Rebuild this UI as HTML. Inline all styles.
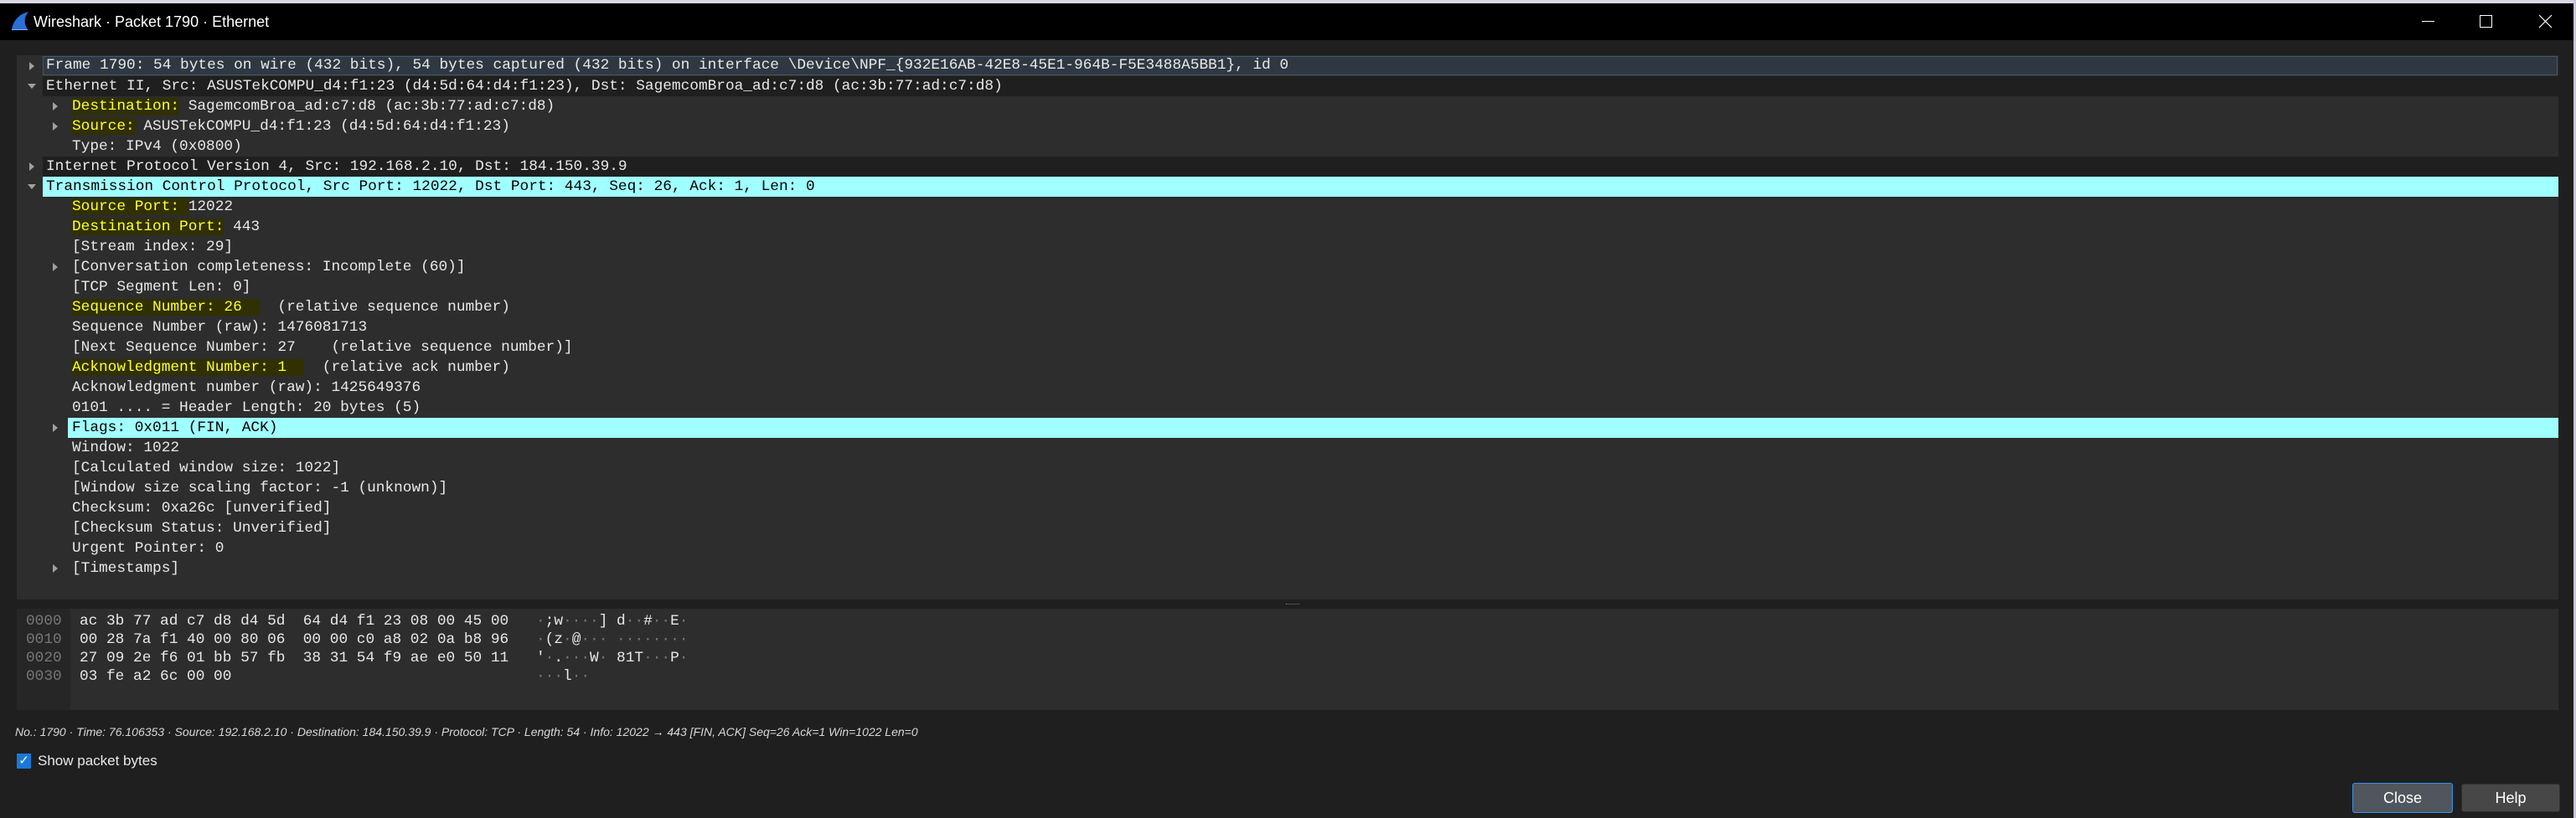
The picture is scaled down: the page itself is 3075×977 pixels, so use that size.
<!DOCTYPE html>
<html><head><meta charset="utf-8"><style>
*{margin:0;padding:0;box-sizing:border-box}
body{width:3075px;height:977px;background:#1f1f1f;position:relative;overflow:hidden;font-family:"Liberation Sans",sans-serif}
.mono{font-family:"Liberation Mono",monospace;font-size:17.8px}
.row{position:absolute;left:20px;width:3034px;height:24px;line-height:24px;color:#e8e8e8;white-space:pre}
.row .t{position:absolute;top:0;white-space:pre}
.dk{background:#1f1f1f}
.cy .t{background:#a0ffff;color:#000}
.y{background:#303000;color:#ffff30}
.ar{position:absolute;top:7px;width:0;height:0;border-top:5px solid transparent;border-bottom:5px solid transparent;border-left:6px solid #a0a0a0}
.ad{position:absolute;top:9px;width:0;height:0;border-left:5px solid transparent;border-right:5px solid transparent;border-top:6px solid #a0a0a0}
.hx{position:absolute;height:22px;line-height:22px;color:#e8e8e8;white-space:pre}
.g{color:#777}
</style></head><body>
<div style="position:absolute;left:0;top:0;width:3075px;height:4px;background:#d8d8e4"></div>
<div style="position:absolute;left:3072px;top:0;width:3px;height:977px;background:#c8c8d8"></div>
<div style="position:absolute;left:0;top:4px;width:3072px;height:44px;background:#000"></div>
<svg style="position:absolute;left:12px;top:13px" width="24" height="24" viewBox="0 0 24 24"><path d="M2 22 C4 12 10 4 22 1 C17 7 16 15 21 22 Z" fill="#2a6fd6"/><path d="M2 22 L21 22 L21 23 L2 23Z" fill="#7fb0ff"/></svg>
<div style="position:absolute;left:40px;top:14px;font-size:18px;color:#fff;line-height:24px">Wireshark · Packet 1790 · Ethernet</div>
<div style="position:absolute;left:2891px;top:25px;width:15px;height:1px;background:#fff"></div>
<div style="position:absolute;left:2960px;top:18px;width:15px;height:15px;border:1px solid #fff"></div>
<svg style="position:absolute;left:3030px;top:17px" width="17" height="17"><path d="M1 1L16 16M16 1L1 16" stroke="#fff" stroke-width="1.2"/></svg>

<div style="position:absolute;left:20px;top:66px;width:3034px;height:650px;background:#2d2d2d"></div>
<div class="mono">
<div class="row" style="top:67px"><div class="ar" style="left:15px"></div><div class="t" style="left:31px;width:3002px;height:23px;top:0;background:#2f3842;border:1px solid #3d5870;line-height:21px;padding-left:3px">Frame 1790: 54 bytes on wire (432 bits), 54 bytes captured (432 bits) on interface \Device\NPF_{932E16AB-42E8-45E1-964B-F5E3488A5BB1}, id 0</div></div>
<div class="row" style="top:91px"><div class="ad" style="left:13px"></div><div class="t dk" style="left:31px;width:3003px;padding-left:4px">Ethernet II, Src: ASUSTekCOMPU_d4:f1:23 (d4:5d:64:d4:f1:23), Dst: SagemcomBroa_ad:c7:d8 (ac:3b:77:ad:c7:d8)</div></div>
<div class="row" style="top:115px"><div class="ar" style="left:43px"></div><div class="t" style="left:66px"><span class="y">Destination:</span> SagemcomBroa_ad:c7:d8 (ac:3b:77:ad:c7:d8)</div></div>
<div class="row" style="top:139px"><div class="ar" style="left:43px"></div><div class="t" style="left:66px"><span class="y">Source:</span> ASUSTekCOMPU_d4:f1:23 (d4:5d:64:d4:f1:23)</div></div>
<div class="row" style="top:163px"><div class="t" style="left:66px">Type: IPv4 (0x0800)</div></div>
<div class="row" style="top:187px"><div class="ar" style="left:15px"></div><div class="t dk" style="left:31px;width:3003px;padding-left:4px">Internet Protocol Version 4, Src: 192.168.2.10, Dst: 184.150.39.9</div></div>
<div class="row cy" style="top:211px"><div class="ad" style="left:13px"></div><div class="t" style="left:31px;width:3003px;padding-left:4px">Transmission Control Protocol, Src Port: 12022, Dst Port: 443, Seq: 26, Ack: 1, Len: 0</div></div>
<div class="row" style="top:235px"><div class="t" style="left:66px"><span class="y">Source Port: </span>12022</div></div>
<div class="row" style="top:259px"><div class="t" style="left:66px"><span class="y">Destination Port:</span> 443</div></div>
<div class="row" style="top:283px"><div class="t" style="left:66px">[Stream index: 29]</div></div>
<div class="row" style="top:307px"><div class="ar" style="left:43px"></div><div class="t" style="left:66px">[Conversation completeness: Incomplete (60)]</div></div>
<div class="row" style="top:331px"><div class="t" style="left:66px">[TCP Segment Len: 0]</div></div>
<div class="row" style="top:355px"><div class="t" style="left:66px"><span class="y">Sequence Number: 26  </span>  (relative sequence number)</div></div>
<div class="row" style="top:379px"><div class="t" style="left:66px">Sequence Number (raw): 1476081713</div></div>
<div class="row" style="top:403px"><div class="t" style="left:66px">[Next Sequence Number: 27    (relative sequence number)]</div></div>
<div class="row" style="top:427px"><div class="t" style="left:66px"><span class="y">Acknowledgment Number: 1  </span>  (relative ack number)</div></div>
<div class="row" style="top:451px"><div class="t" style="left:66px">Acknowledgment number (raw): 1425649376</div></div>
<div class="row" style="top:475px"><div class="t" style="left:66px">0101 .... = Header Length: 20 bytes (5)</div></div>
<div class="row cy" style="top:499px"><div class="ar" style="left:43px"></div><div class="t" style="left:61px;width:2973px;padding-left:5px">Flags: 0x011 (FIN, ACK)</div></div>
<div class="row" style="top:523px"><div class="t" style="left:66px">Window: 1022</div></div>
<div class="row" style="top:547px"><div class="t" style="left:66px">[Calculated window size: 1022]</div></div>
<div class="row" style="top:571px"><div class="t" style="left:66px">[Window size scaling factor: -1 (unknown)]</div></div>
<div class="row" style="top:595px"><div class="t" style="left:66px">Checksum: 0xa26c [unverified]</div></div>
<div class="row" style="top:619px"><div class="t" style="left:66px">[Checksum Status: Unverified]</div></div>
<div class="row" style="top:643px"><div class="t" style="left:66px">Urgent Pointer: 0</div></div>
<div class="row" style="top:667px"><div class="ar" style="left:43px"></div><div class="t" style="left:66px">[Timestamps]</div></div>

<div style="position:absolute;left:20px;top:727px;width:3034px;height:121px;background:#2d2d2d"></div>
<div style="position:absolute;left:20px;top:727px;width:64px;height:121px;background:#262626"></div>
<div class="hx g" style="left:31px;top:731px">0000</div>
<div class="hx g" style="left:31px;top:753px">0010</div>
<div class="hx g" style="left:31px;top:775px">0020</div>
<div class="hx g" style="left:31px;top:797px">0030</div>
<div class="hx" style="left:95px;top:731px">ac 3b 77 ad c7 d8 d4 5d  64 d4 f1 23 08 00 45 00</div>
<div class="hx" style="left:95px;top:753px">00 28 7a f1 40 00 80 06  00 00 c0 a8 02 0a b8 96</div>
<div class="hx" style="left:95px;top:775px">27 09 2e f6 01 bb 57 fb  38 31 54 f9 ae e0 50 11</div>
<div class="hx" style="left:95px;top:797px">03 fe a2 6c 00 00</div>
<div class="hx" style="left:640px;top:731px"><span class="g">·</span>;w<span class="g">····</span>] d<span class="g">··</span>#<span class="g">··</span>E<span class="g">·</span></div>
<div class="hx" style="left:640px;top:753px"><span class="g">·</span>(z<span class="g">·</span>@<span class="g">···</span> <span class="g">········</span></div>
<div class="hx" style="left:640px;top:775px">'<span class="g">·</span>.<span class="g">···</span>W<span class="g">·</span> 81T<span class="g">···</span>P<span class="g">·</span></div>
<div class="hx" style="left:640px;top:797px"><span class="g">···</span>l<span class="g">··</span></div>
</div>
<div style="position:absolute;left:1535px;top:721px;width:16px;height:2px;border-top:1px dotted #777"></div>

<div style="position:absolute;left:18px;top:865px;font-size:14px;font-style:italic;color:#d8d8d8;white-space:pre;line-height:18px">No.: 1790 · Time: 76.106353 · Source: 192.168.2.10 · Destination: 184.150.39.9 · Protocol: TCP · Length: 54 · Info: 12022 → 443 [FIN, ACK] Seq=26 Ack=1 Win=1022 Len=0</div>
<div style="position:absolute;left:20px;top:900px;width:17px;height:18px;background:#1a78d8;color:#fff;font-size:15px;line-height:18px;text-align:center">✓</div>
<div style="position:absolute;left:45px;top:899px;font-size:17px;color:#e8e8e8;line-height:20px">Show packet bytes</div>
<div style="position:absolute;left:2808px;top:935px;width:120px;height:36px;background:#50565d;border:1px solid #3b8fe2;border-radius:3px;color:#fff;font-size:18px;text-align:center;line-height:34px">Close</div>
<div style="position:absolute;left:2938px;top:936px;width:118px;height:34px;background:#474747;border:1px solid #303030;border-radius:3px;color:#fff;font-size:18px;text-align:center;line-height:32px">Help</div>
</body></html>
